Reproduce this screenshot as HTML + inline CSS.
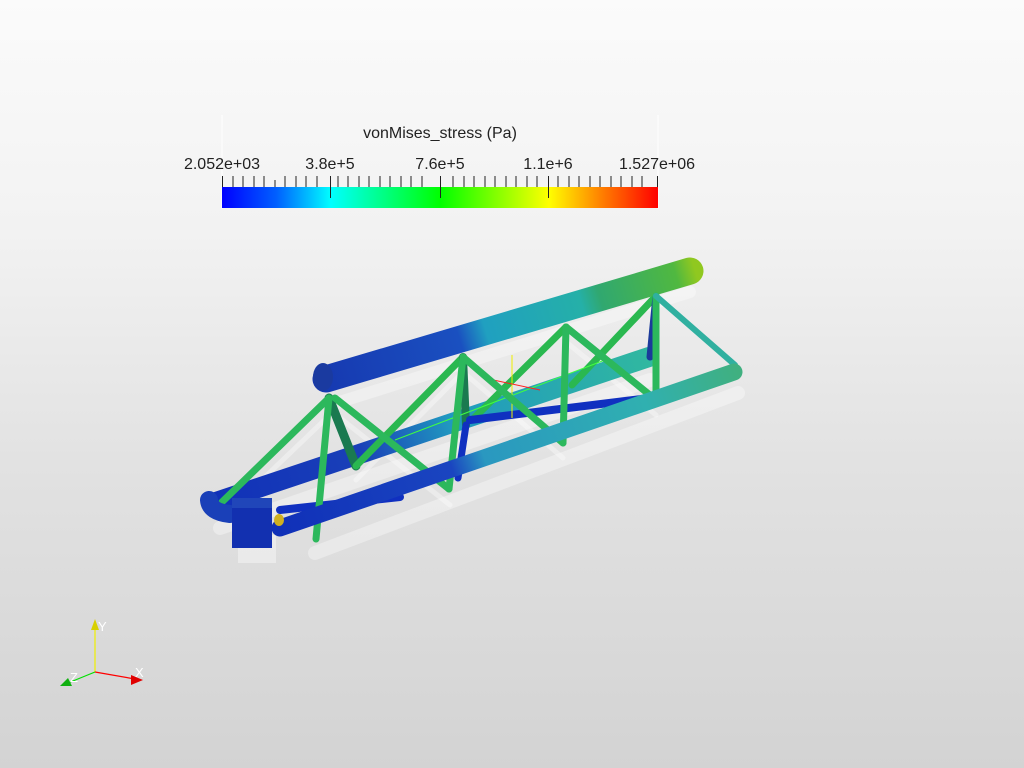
<!DOCTYPE html>
<html><head><meta charset="utf-8"><style>
html,body{margin:0;padding:0}
body{width:1024px;height:768px;overflow:hidden;background:linear-gradient(#fbfbfb 0%,#f2f2f2 30%,#e2e2e2 60%,#d3d3d3 100%);font-family:"Liberation Sans",sans-serif}
svg{position:absolute;left:0;top:0}
</style></head><body>
<svg width="1024" height="768" viewBox="0 0 1024 768">
<defs>
<linearGradient id="jet" x1="0" x2="1">
<stop offset="0" stop-color="#0000ff"/><stop offset="0.125" stop-color="#0060ff"/><stop offset="0.25" stop-color="#00ffff"/><stop offset="0.5" stop-color="#00ff00"/><stop offset="0.75" stop-color="#ffff00"/><stop offset="0.87" stop-color="#ff8000"/><stop offset="1" stop-color="#ff0000"/>
</linearGradient>
<linearGradient id="top" gradientUnits="userSpaceOnUse" x1="316" y1="384" x2="695" y2="270">
<stop offset="0" stop-color="#1638b0"/><stop offset="0.38" stop-color="#1a50c0"/><stop offset="0.45" stop-color="#20a0c0"/><stop offset="0.7" stop-color="#25b0a8"/><stop offset="0.75" stop-color="#30a870"/><stop offset="0.95" stop-color="#50b840"/><stop offset="1" stop-color="#90c820"/>
</linearGradient>
<linearGradient id="front" gradientUnits="userSpaceOnUse" x1="280" y1="536" x2="738" y2="373">
<stop offset="0" stop-color="#1030b8"/><stop offset="0.38" stop-color="#1a45c0"/><stop offset="0.45" stop-color="#2a98c0"/><stop offset="0.8" stop-color="#30b0b0"/><stop offset="1" stop-color="#40b080"/>
</linearGradient>
<linearGradient id="back" gradientUnits="userSpaceOnUse" x1="209" y1="511" x2="650" y2="360">
<stop offset="0" stop-color="#1030b8"/><stop offset="0.35" stop-color="#1a40b8"/><stop offset="0.55" stop-color="#2098c0"/><stop offset="1" stop-color="#30b8a0"/>
</linearGradient>
</defs>

<line x1="222" y1="115" x2="222" y2="209" stroke="#fff" stroke-width="1"/>
<line x1="658" y1="115" x2="658" y2="209" stroke="#fff" stroke-width="1"/>
<text x="440" y="138" font-size="16" text-anchor="middle" fill="#222">vonMises_stress (Pa)</text>
<g font-size="16" fill="#222" text-anchor="middle">
<text x="222" y="169">2.052e+03</text><text x="330" y="169">3.8e+5</text><text x="440" y="169">7.6e+5</text><text x="548" y="169">1.1e+6</text><text x="657" y="169">1.527e+06</text>
</g>
<rect x="222" y="187" width="436" height="21" fill="url(#jet)"/>
<g stroke="#222" stroke-width="1">
<path d="M222.5 176V187M233 176V187M243 176V187M254 176V187M264 176V187M275 180V187M285 176V187M296 176V187M306 176V187M317 176V187M330.5 176V198M338 176V187M348 176V187M359 176V187M369 176V187M380 176V187M390 176V187M401 176V187M411 176V187M422 176V187M440.5 176V198M453 176V187M464 176V187M474 176V187M485 176V187M495 176V187M506 176V187M516 176V187M527 176V187M537 176V187M548.5 176V198M558 176V187M569 176V187M579 176V187M590 176V187M600 176V187M611 176V187M621 176V187M632 176V187M642 176V187M657.5 176V187"/>
</g>

<g stroke="#ffffff" stroke-opacity="0.35" fill="none" stroke-linecap="round">
<line x1="220" y1="528" x2="650" y2="380" stroke-width="14"/>
<line x1="315" y1="553" x2="738" y2="393" stroke-width="14"/>
<line x1="330" y1="405" x2="690" y2="292" stroke-width="12"/>
<line x1="220" y1="520" x2="335" y2="410" stroke-width="5"/>
<line x1="330" y1="410" x2="450" y2="505" stroke-width="5"/>
<line x1="463" y1="372" x2="563" y2="458" stroke-width="5"/>
<line x1="566" y1="342" x2="656" y2="415" stroke-width="5"/>
<line x1="463" y1="372" x2="356" y2="480" stroke-width="5"/>
<rect x="238" y="535" width="38" height="28" fill="#fff" stroke="none" fill-opacity="0.4"/>
</g>

<g stroke-linecap="round" fill="none">
<line x1="213" y1="503" x2="649" y2="357" stroke="url(#back)" stroke-width="20"/>
<line x1="329" y1="398" x2="356" y2="466" stroke="#1a7a50" stroke-width="9"/>
<line x1="463" y1="357" x2="356" y2="466" stroke="#2ab850" stroke-width="7"/>
<line x1="463" y1="357" x2="466" y2="425" stroke="#1a7a50" stroke-width="8"/>
<line x1="566" y1="327" x2="472" y2="420" stroke="#2ab850" stroke-width="7"/>
<line x1="656" y1="296" x2="572" y2="385" stroke="#2ab850" stroke-width="7"/>
<line x1="656" y1="296" x2="650" y2="357" stroke="#1a3a9a" stroke-width="7"/>
<line x1="280" y1="510" x2="400" y2="497" stroke="#1030c0" stroke-width="8"/>
<line x1="470" y1="420" x2="650" y2="398" stroke="#1030c0" stroke-width="8"/>
<line x1="466" y1="425" x2="458" y2="478" stroke="#1030c0" stroke-width="7"/>
</g>
<line x1="395" y1="440" x2="605" y2="360" stroke="#40ff40" stroke-width="1"/>
<line x1="512" y1="355" x2="512" y2="418" stroke="#f0f000" stroke-width="1"/>
<line x1="484" y1="378" x2="540" y2="390" stroke="#ff2020" stroke-width="1"/>

<g stroke-linecap="round" fill="none">
<line x1="326" y1="379" x2="690" y2="271" stroke="url(#top)" stroke-width="27"/>
</g>
<ellipse cx="323" cy="377" rx="10" ry="14" fill="#1a3aa0"/>

<g stroke-linecap="round" fill="none" stroke="#2cb85c">
<line x1="222" y1="502" x2="329" y2="398" stroke-width="7"/>
<line x1="329" y1="398" x2="316" y2="539" stroke-width="7"/>
<line x1="335" y1="398" x2="449" y2="489" stroke-width="7"/>
<line x1="463" y1="357" x2="449" y2="489" stroke-width="7"/>
<line x1="463" y1="357" x2="563" y2="443" stroke-width="7"/>
<line x1="566" y1="327" x2="563" y2="443" stroke-width="7"/>
<line x1="566" y1="327" x2="656" y2="400" stroke-width="7"/>
<line x1="656" y1="296" x2="656" y2="400" stroke-width="7"/>
<line x1="656" y1="296" x2="735" y2="365" stroke-width="6" stroke="#30b0a0"/>
</g>
<g stroke-linecap="round" fill="none">
<line x1="280" y1="528" x2="734" y2="372" stroke="url(#front)" stroke-width="17"/>
<path d="M209 500 Q210 512 230 514" stroke="#1a40b8" stroke-width="18"/>
</g>
<rect x="232" y="498" width="40" height="50" fill="#1230b0"/>
<rect x="232" y="498" width="40" height="10" fill="#2a55c0" opacity="0.6"/>
<ellipse cx="279" cy="520" rx="5" ry="6" fill="#d0b020"/>

<g stroke-width="1.2">
<line x1="95" y1="672" x2="95" y2="625" stroke="#f0f000"/>
<line x1="95" y1="672" x2="135" y2="679" stroke="#ff0000"/>
<line x1="95" y1="672" x2="68" y2="683" stroke="#00e000"/>
</g>
<polygon points="95,619 91,630 99,630" fill="#d8d000"/>
<polygon points="143,680 131,675 131,685" fill="#e00000"/>
<polygon points="60,686 68,678 72,686" fill="#10b010"/>
<g fill="#fff" font-size="13">
<text x="98" y="631">Y</text><text x="135" y="677">X</text><text x="70" y="682">Z</text>
</g>
</svg>
</body></html>
